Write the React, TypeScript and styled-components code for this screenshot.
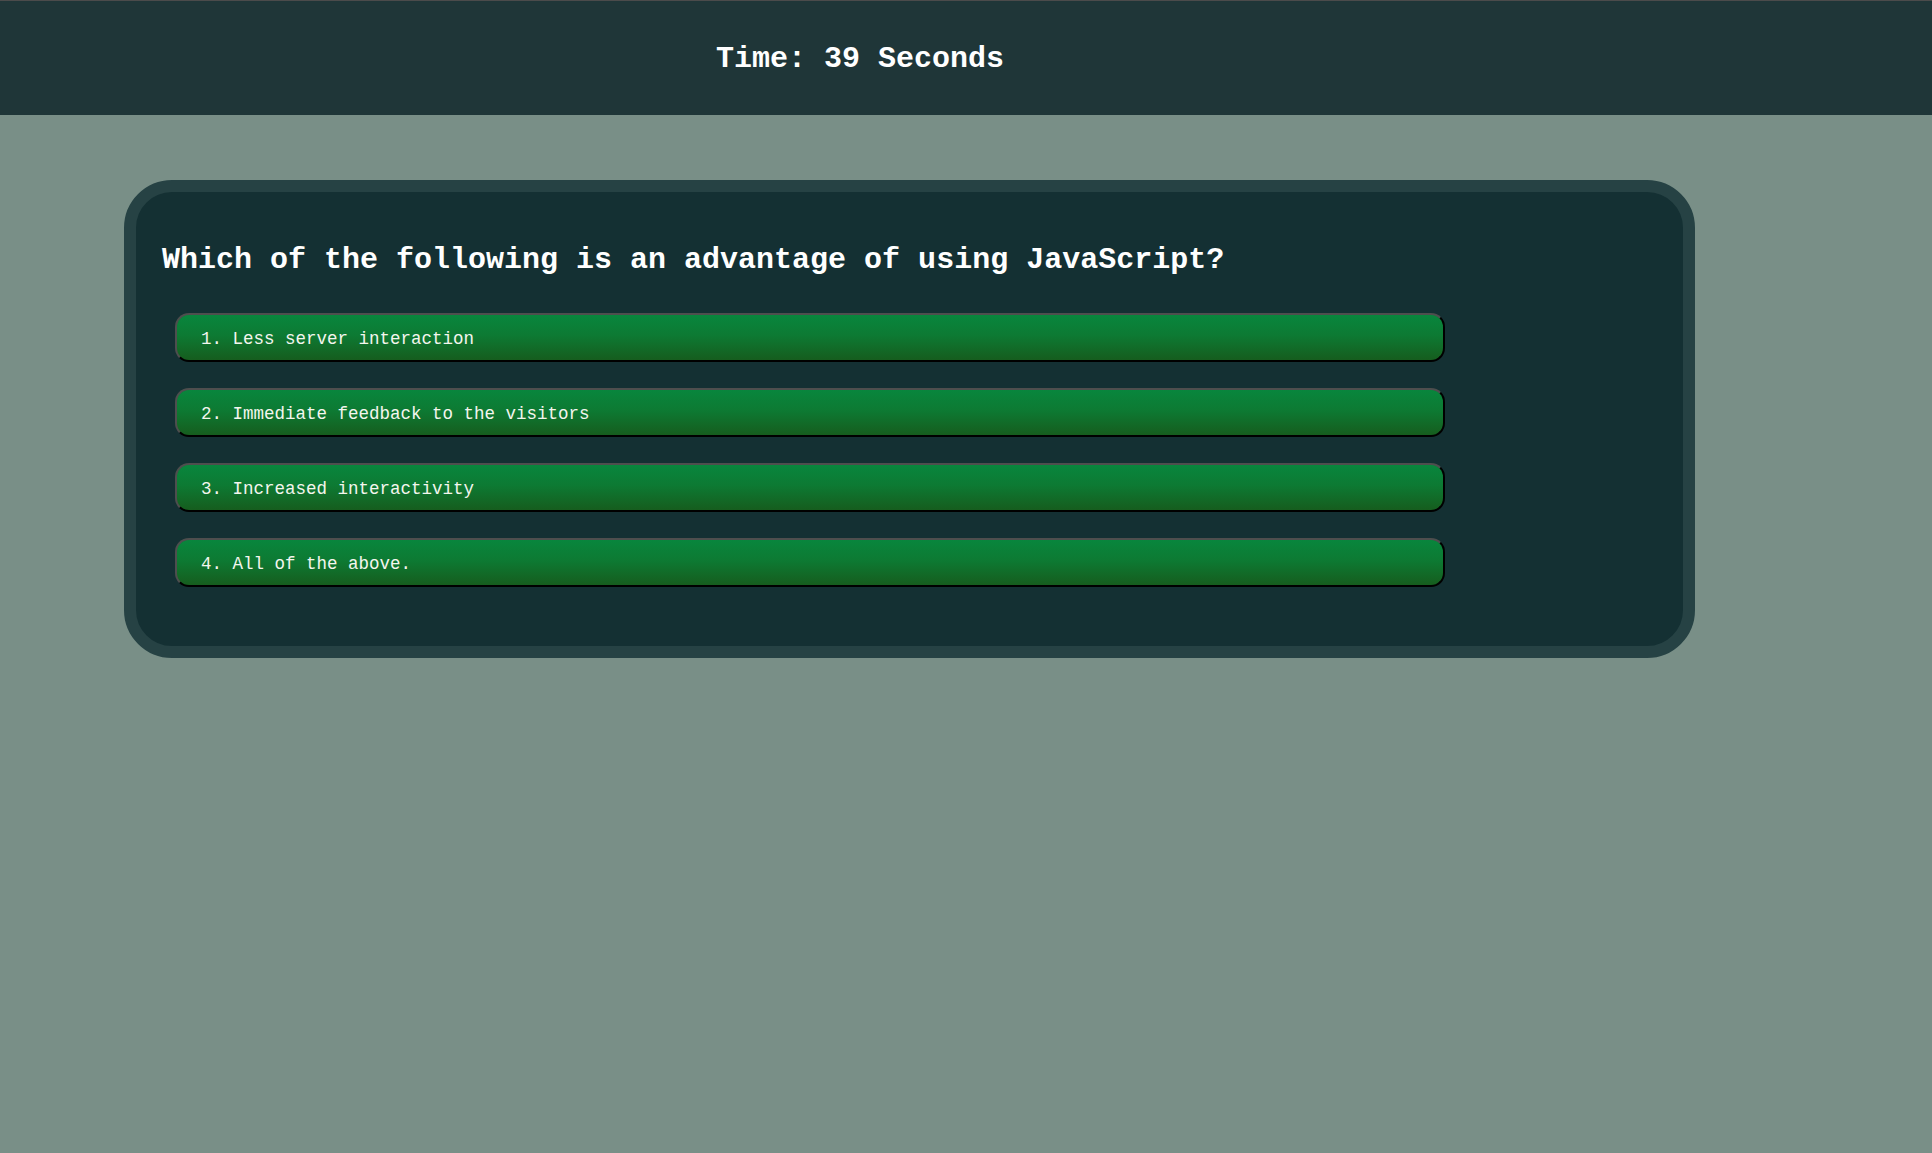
import React from "react";
import styled, { createGlobalStyle } from "styled-components";

const GlobalStyle = createGlobalStyle`
  html, body {
    margin: 0;
    padding: 0;
    background: #798f87;
    font-family: "Courier New", Courier, "Liberation Mono", monospace;
  }
  * { box-sizing: border-box; }
`;

const Page = styled.div`
  min-height: 1153px;
  background: #798f87;
  display: flex;
  flex-direction: column;
`;

const TopBar = styled.header`
  height: 115px;
  background: #1f3638;
  border-top: 1px solid #4b4b4b;
  display: flex;
  align-items: center;
  padding: 2px 0 0 716px;
`;

const Timer = styled.h1`
  margin: 0;
  font-family: "Courier New", Courier, "Liberation Mono", monospace;
  font-size: 30px;
  font-weight: 700;
  color: #ffffff;
  line-height: 34px;
`;

const Main = styled.main`
  padding: 65px 0 0 124px;
`;

const Card = styled.section`
  width: 1571px;
  background: #143033;
  border: 12px solid #264244;
  border-radius: 48px;
  padding: 51px 25px 59px 26px;
`;

const Question = styled.h2`
  margin: 0 0 36px 0;
  font-family: "Courier New", Courier, "Liberation Mono", monospace;
  font-size: 30px;
  font-weight: 700;
  line-height: 34px;
  color: #ffffff;
`;

const OptionList = styled.ol`
  list-style: none;
  margin: 0 0 0 13px;
  padding: 0;
  display: flex;
  flex-direction: column;
  gap: 26px;
`;

const OptionButton = styled.button`
  width: 1270px;
  height: 49px;
  display: flex;
  align-items: center;
  padding: 2px 0 0 24px;
  border-style: solid;
  border-width: 2px;
  border-color: #4e4e4e #000000 #000000 #4e4e4e;
  border-radius: 14px;
  background: linear-gradient(to bottom, #08863d 0%, #0d7a33 45%, #165d1e 100%);
  color: #f4f6ee;
  font-family: "Courier New", Courier, "Liberation Mono", monospace;
  font-size: 17.5px;
  font-weight: 400;
  text-align: left;
  cursor: pointer;
`;

const options = [
  "Less server interaction",
  "Immediate feedback to the visitors",
  "Increased interactivity",
  "All of the above.",
];

export default function App() {
  return (
    <>
      <GlobalStyle />
      <Page>
        <TopBar>
          <Timer>Time: 39 Seconds</Timer>
        </TopBar>
        <Main>
          <Card>
            <Question>Which of the following is an advantage of using JavaScript?</Question>
            <OptionList>
              {options.map((o, i) => (
                <li key={o}>
                  <OptionButton>
                    {i + 1}. {o}
                  </OptionButton>
                </li>
              ))}
            </OptionList>
          </Card>
        </Main>
      </Page>
    </>
  );
}
